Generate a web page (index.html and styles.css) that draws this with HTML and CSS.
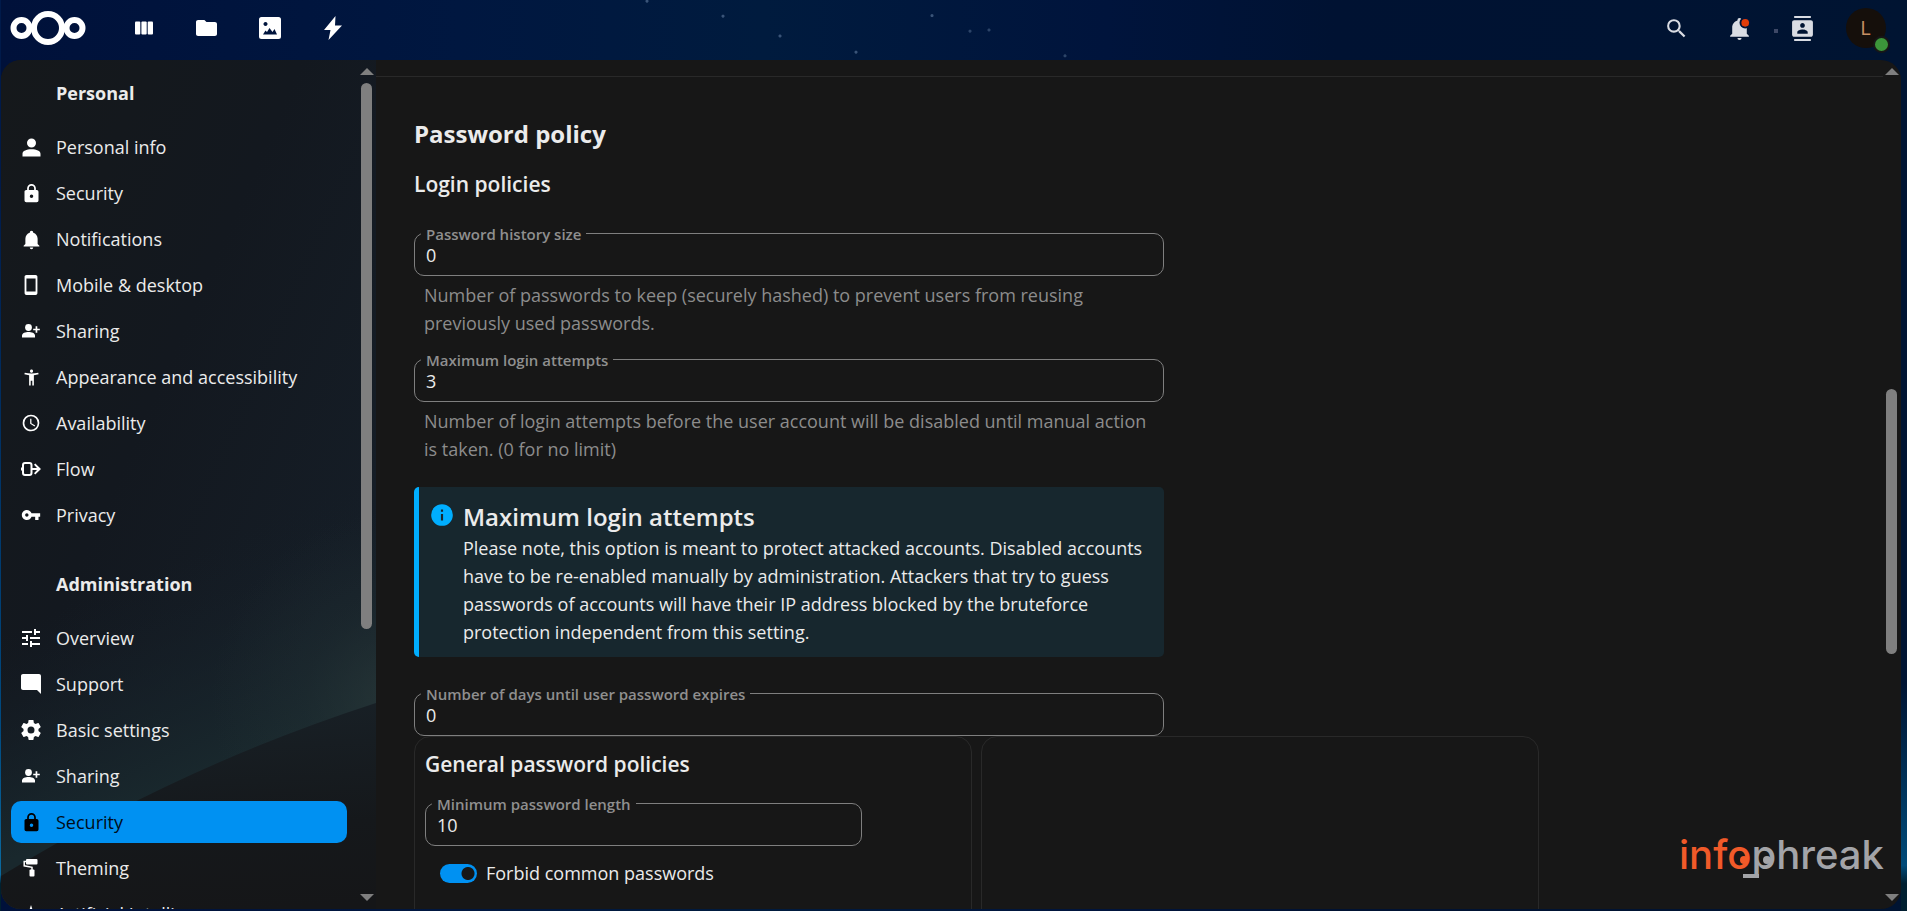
FILE: index.html
```html
<!DOCTYPE html>
<html lang="en">
<head>
<meta charset="utf-8">
<title>Security - Administration settings</title>
<link rel="stylesheet" href="styles.css">
</head>
<body>
<header class="topbar">
  <a class="brand" href="#" aria-label="Home">
    <svg width="76" height="36" viewBox="0 0 76 36" fill="none" stroke="#fff" stroke-width="6"><circle cx="38" cy="18" r="14"/><circle cx="11.500" cy="18" r="8"/><circle cx="64.500" cy="18" r="8"/></svg>
  </a>
  <nav class="apps" aria-label="Applications">
    <a class="app" href="#" aria-label="Deck"><svg width="18" height="14" viewBox="0 0 18 14" fill="#fff"><rect width="5.300" height="13" y=".5" rx="1"/><rect x="6.400" y=".5" width="5.300" height="13" rx="1"/><rect x="12.700" y=".5" width="5.300" height="13" rx="1"/></svg></a>
    <a class="app" href="#" aria-label="Files"><svg width="21" height="16" viewBox="2 4 20 16" preserveAspectRatio="none" fill="#fff"><path d="M10 4H4c-1.100 0-2 .9-2 2v12c0 1.100.9 2 2 2h16c1.100 0 2-.9 2-2V8c0-1.100-.9-2-2-2h-8l-2-2z"/></svg></a>
    <a class="app" href="#" aria-label="Photos"><svg width="22" height="22" viewBox="0 0 22 22"><path fill="#fff" fill-rule="evenodd" d="M2.500 0h17A2.500 2.500 0 0 1 22 2.500v17a2.500 2.500 0 0 1-2.500 2.500h-17A2.500 2.500 0 0 1 0 19.500v-17A2.500 2.500 0 0 1 2.500 0zM6.500 5a2 2 0 1 0 .01 0zM4 17.500h14L15.500 12l-2 3-3-4-2.500 4-1.500-1.500z"/></svg></a>
    <a class="app" href="#" aria-label="Activity"><svg width="20" height="26" viewBox="0 0 20 26" fill="#fff"><path d="M12.500 1 1 15h6.500L5.500 25 19 10.500h-7z"/></svg></a>
  </nav>
  <div class="tools">
    <button class="tool" aria-label="Search"><svg width="25" height="25" viewBox="0 0 24 24"><path d="M9.500,3A6.500,6.500 0 0,1 16,9.500C16,11.110 15.410,12.590 14.440,13.730L14.710,14H15.500L20.500,19L19,20.500L14,15.500V14.710L13.730,14.440C12.590,15.410 11.110,16 9.500,16A6.500,6.500 0 0,1 3,9.500A6.500,6.500 0 0,1 9.500,3M9.500,5C7,5 5,7 5,9.500C5,12 7,14 9.500,14C12,14 14,12 14,9.500C14,7 12,5 9.500,5Z"/></svg></button>
    <button class="tool" aria-label="Notifications"><svg width="25" height="25" viewBox="0 0 24 24"><path d="M21,19V20H3V19L5,17V11C5,7.900 7.030,5.170 10,4.290C10,4.190 10,4.100 10,4A2,2 0 0,1 12,2A2,2 0 0,1 14,4C14,4.100 14,4.190 14,4.290C16.970,5.170 19,7.900 19,11V17L21,19M14,21A2,2 0 0,1 12,23A2,2 0 0,1 10,21"/><circle cx="17.500" cy="6.500" r="5.500" fill="#001437"/><circle cx="17.500" cy="6.500" r="3.700" fill="#e23c08"/></svg></button>
    <button class="tool" aria-label="Contacts"><svg width="25" height="25" viewBox="0 0 24 24"><path d="M20 0H4v2h16V0zM4 24h16v-2H4v2zM20 4H4c-1.100 0-2 .9-2 2v12c0 1.100.9 2 2 2h16c1.100 0 2-.9 2-2V6c0-1.100-.9-2-2-2zm-8 2.750c1.240 0 2.250 1.010 2.250 2.250s-1.010 2.250-2.250 2.250S9.750 10.240 9.750 9 10.760 6.750 12 6.750zM17 17H7v-1.500c0-1.670 3.330-2.500 5-2.500s5 .83 5 2.500V17z"/></svg></button>
    <button class="tool" aria-label="Account menu"><span class="avatar">L<span class="status"></span></span></button>
  </div>
</header>

<div class="shell">
  <aside class="sidebar">
    <svg class="wallpaper" viewBox="0 0 375 849" preserveAspectRatio="none" aria-hidden="true">
      <defs>
        <linearGradient id="base" x1="0" y1="0" x2="1" y2="1"><stop offset="0" stop-color="#15181b"/><stop offset=".4" stop-color="#13181f"/><stop offset=".75" stop-color="#151d26"/></linearGradient>
        <linearGradient id="glow" gradientUnits="userSpaceOnUse" x1="300" y1="672" x2="215" y2="480"><stop offset="0" stop-color="#19282d"/><stop offset=".45" stop-color="#17232a" stop-opacity=".6"/><stop offset="1" stop-color="#151d26" stop-opacity="0"/></linearGradient>
        <radialGradient id="shine" gradientUnits="userSpaceOnUse" cx="400" cy="640" r="190"><stop offset="0" stop-color="#2b3a3b" stop-opacity=".7"/><stop offset=".5" stop-color="#263437" stop-opacity=".25"/><stop offset="1" stop-color="#263437" stop-opacity="0"/></radialGradient>
        <linearGradient id="ground" x1=".6" y1="0" x2=".7" y2="1"><stop offset="0" stop-color="#182026"/><stop offset=".6" stop-color="#15181b"/><stop offset="1" stop-color="#151618"/></linearGradient>
      </defs>
      <rect width="375" height="849" fill="url(#base)"/>
      <rect width="375" height="849" fill="url(#glow)"/>
      <rect width="375" height="849" fill="url(#shine)"/>
      <path d="M0 816Q180 706 375 643V849H0z" fill="url(#ground)"/>
    </svg>
    <nav class="menu" aria-label="Settings">
      <h2 class="menu-title">Personal</h2>
      <ul class="menu-list">
        <li><a class="item" href="#"><svg width="27" height="27" viewBox="0 0 24 24"><path d="M12,4A4,4 0 0,1 16,8A4,4 0 0,1 12,12A4,4 0 0,1 8,8A4,4 0 0,1 12,4M12,13.500C16.420,13.500 20,15 20,17.500V20H4V17.500C4,15 7.580,13.500 12,13.500Z"/></svg>Personal info</a></li>
        <li><a class="item" href="#"><svg width="21" height="21" viewBox="0 0 24 24"><path d="M12,17A2,2 0 0,0 14,15C14,13.890 13.100,13 12,13A2,2 0 0,0 10,15A2,2 0 0,0 12,17M18,8A2,2 0 0,1 20,10V20A2,2 0 0,1 18,22H6A2,2 0 0,1 4,20V10C4,8.890 4.900,8 6,8H7V6A5,5 0 0,1 12,1A5,5 0 0,1 17,6V8H18M12,3A3,3 0 0,0 9,6V8H15V6A3,3 0 0,0 12,3Z"/></svg>Security</a></li>
        <li><a class="item" href="#"><svg width="21" height="21" viewBox="0 0 24 24"><path d="M21,19V20H3V19L5,17V11C5,7.900 7.030,5.170 10,4.290C10,4.190 10,4.100 10,4A2,2 0 0,1 12,2A2,2 0 0,1 14,4C14,4.100 14,4.190 14,4.290C16.970,5.170 19,7.900 19,11V17L21,19M14,21A2,2 0 0,1 12,23A2,2 0 0,1 10,21"/></svg>Notifications</a></li>
        <li><a class="item" href="#"><svg width="22" height="22" viewBox="0 0 24 24"><path d="M17,19H7V5H17M17,1H7C5.890,1 5,1.890 5,3V21A2,2 0 0,0 7,23H17A2,2 0 0,0 19,21V3C19,1.890 18.100,1 17,1Z"/></svg>Mobile &amp; desktop</a></li>
        <li><a class="item" href="#"><svg width="18" height="14" viewBox="0 0 18 14"><circle cx="6.500" cy="3.500" r="3.400"/><path d="M0 13.500v-2C0 9 3.500 8 6.500 8s6.500 1 6.500 3.500v2zM13.600 2.300h1.700v2.400h2.500v1.600h-2.500v2.400h-1.700V6.300h-2.400V4.700h2.400z"/></svg>Sharing</a></li>
        <li><a class="item" href="#"><svg width="19" height="19" viewBox="0 0 24 24"><path d="M20.500 6c-2.610.7-5.670 1-8.500 1s-5.890-.3-8.500-1L3 8c1.860.5 4 .83 6 1v13h2v-6h2v6h2V9c2-.17 4.140-.5 6-1l-.5-2zM12 6c1.100 0 2-.9 2-2s-.9-2-2-2-2 .9-2 2 .9 2 2 2z"/></svg>Appearance and accessibility</a></li>
        <li><a class="item" href="#"><svg width="20" height="20" viewBox="0 0 24 24"><path d="M12,20A8,8 0 0,0 20,12A8,8 0 0,0 12,4A8,8 0 0,0 4,12A8,8 0 0,0 12,20M12,2A10,10 0 0,1 22,12A10,10 0 0,1 12,22C6.470,22 2,17.500 2,12A10,10 0 0,1 12,2M12.500,7V12.250L17,14.920L16.250,16.150L11,13V7H12.500Z"/></svg>Availability</a></li>
        <li><a class="item" href="#"><svg width="20" height="14" viewBox="0 0 20 14"><rect x="2" y="1" width="8.500" height="12" rx="2" fill="none" stroke="#fff" stroke-width="2"/><path d="M0 5.500h2v3H0zM11 6h5l-3-3.200L14.300 1.500 20 7l-5.700 5.500L13 11.200 16 8h-5z"/></svg>Flow</a></li>
        <li><a class="item" href="#"><svg width="20" height="20" viewBox="0 0 24 24"><path d="M12.650 10C11.830 7.670 9.610 6 7 6c-3.310 0-6 2.690-6 6s2.690 6 6 6c2.610 0 4.830-1.670 5.650-4H17v4h4v-4h2v-4H12.650zM7 14c-1.100 0-2-.9-2-2s.9-2 2-2 2 .9 2 2-.9 2-2 2z"/></svg>Privacy</a></li>
      </ul>
      <h2 class="menu-title">Administration</h2>
      <ul class="menu-list">
        <li><a class="item" href="#"><svg width="24" height="24" viewBox="0 0 24 24"><path d="M3 17v2h6v-2H3zM3 5v2h10V5H3zm10 16v-2h8v-2h-8v-2h-2v6h2zM7 9v2H3v2h4v2h2V9H7zm14 4v-2H11v2h10zm-6-4h2V7h4V5h-4V3h-2v6z"/></svg>Overview</a></li>
        <li><a class="item" href="#"><svg width="24" height="24" viewBox="0 0 24 24"><path d="M21.990 4c0-1.100-.89-2-1.990-2H4c-1.100 0-2 .9-2 2v12c0 1.100.9 2 2 2h14l4 4-.01-18z"/></svg>Support</a></li>
        <li><a class="item" href="#"><svg width="24" height="24" viewBox="0 0 24 24"><path d="M12,15.500A3.500,3.500 0 0,1 8.500,12A3.500,3.500 0 0,1 12,8.500A3.500,3.500 0 0,1 15.500,12A3.500,3.500 0 0,1 12,15.500M19.430,12.970C19.470,12.650 19.500,12.330 19.500,12C19.500,11.670 19.470,11.340 19.430,11L21.540,9.370C21.730,9.220 21.780,8.950 21.660,8.730L19.660,5.270C19.540,5.050 19.270,4.960 19.050,5.050L16.560,6.050C16.040,5.660 15.500,5.320 14.870,5.070L14.500,2.420C14.460,2.180 14.250,2 14,2H10C9.750,2 9.540,2.180 9.500,2.420L9.130,5.070C8.500,5.320 7.960,5.660 7.440,6.050L4.950,5.050C4.730,4.960 4.460,5.050 4.340,5.270L2.340,8.730C2.210,8.950 2.270,9.220 2.460,9.370L4.570,11C4.530,11.340 4.500,11.670 4.500,12C4.500,12.330 4.530,12.650 4.570,12.970L2.460,14.630C2.270,14.780 2.210,15.050 2.340,15.270L4.340,18.730C4.460,18.950 4.730,19.030 4.950,18.950L7.440,17.940C7.960,18.340 8.500,18.680 9.130,18.930L9.500,21.580C9.540,21.820 9.750,22 10,22H14C14.250,22 14.460,21.820 14.500,21.580L14.870,18.930C15.500,18.670 16.040,18.340 16.560,17.940L19.050,18.950C19.270,19.030 19.540,18.950 19.660,18.730L21.660,15.270C21.780,15.050 21.730,14.780 21.540,14.630L19.430,12.970Z"/></svg>Basic settings</a></li>
        <li><a class="item" href="#"><svg width="18" height="14" viewBox="0 0 18 14"><circle cx="6.500" cy="3.500" r="3.400"/><path d="M0 13.500v-2C0 9 3.500 8 6.500 8s6.500 1 6.500 3.500v2zM13.600 2.300h1.700v2.400h2.500v1.600h-2.500v2.400h-1.700V6.300h-2.400V4.700h2.400z"/></svg>Sharing</a></li>
        <li><a class="item item-active" href="#" aria-current="page"><svg width="21" height="21" viewBox="0 0 24 24"><path d="M12,17A2,2 0 0,0 14,15C14,13.890 13.100,13 12,13A2,2 0 0,0 10,15A2,2 0 0,0 12,17M18,8A2,2 0 0,1 20,10V20A2,2 0 0,1 18,22H6A2,2 0 0,1 4,20V10C4,8.890 4.900,8 6,8H7V6A5,5 0 0,1 12,1A5,5 0 0,1 17,6V8H18M12,3A3,3 0 0,0 9,6V8H15V6A3,3 0 0,0 12,3Z"/></svg>Security</a></li>
        <li><a class="item" href="#"><svg width="16" height="18" viewBox="0 0 16 18"><rect x="3" y="0" width="11.500" height="5.500" rx="1"/><path d="M3.500 2.500H1.200v4.300l7.800 1.500v3" fill="none" stroke="#fff" stroke-width="1.500"/><rect x="6.500" y="10.500" width="5" height="7" rx="1"/></svg>Theming</a></li>
        <li><a class="item" href="#"><svg width="20" height="20" viewBox="0 0 20 20"><path d="M10 1l2.200 6.800L19 10l-6.800 2.200L10 19l-2.200-6.800L1 10l6.800-2.200z"/></svg>Artificial Intelligence</a></li>
      </ul>
    </nav>
    <div class="scrollbar" aria-hidden="true">
      <span class="arrow arrow-up"></span>
      <div class="track"><span class="thumb thumb-nav"></span></div>
      <span class="arrow arrow-down"></span>
    </div>
  </aside>

  <main class="content">
    <div class="page">
      <section class="policy">
        <h1 class="title">Password policy</h1>
        <h2 class="subtitle">Login policies</h2>
        <div class="form">
          <div class="field">
            <label class="field-label" for="history">Password history size</label>
            <input class="field-input" id="history" type="text" inputmode="numeric" value="0">
          </div>
          <p class="hint">Number of passwords to keep (securely hashed) to prevent users from reusing previously used passwords.</p>
          <div class="field">
            <label class="field-label" for="attempts">Maximum login attempts</label>
            <input class="field-input" id="attempts" type="text" inputmode="numeric" value="3">
          </div>
          <p class="hint">Number of login attempts before the user account will be disabled until manual action is taken. (0 for no limit)</p>
          <div class="note" role="note">
            <svg class="note-icon" width="26" height="26" viewBox="0 0 24 24" fill="#00aeff"><path d="M13,9H11V7H13M13,17H11V11H13M12,2A10,10 0 0,0 2,12A10,10 0 0,0 12,22A10,10 0 0,0 22,12A10,10 0 0,0 12,2Z"/></svg>
            <div>
              <h3 class="note-title">Maximum login attempts</h3>
              <p class="note-text">Please note, this option is meant to protect attacked accounts. Disabled accounts have to be re-enabled manually by administration. Attackers that try to guess passwords of accounts will have their IP address blocked by the bruteforce protection independent from this setting.</p>
            </div>
          </div>
          <div class="field">
            <label class="field-label" for="expiry">Number of days until user password expires</label>
            <input class="field-input" id="expiry" type="text" inputmode="numeric" value="0">
          </div>
        </div>
        <div class="cards">
          <div class="card">
            <h2 class="card-title">General password policies</h2>
            <div class="field field-short">
              <label class="field-label" for="minlength">Minimum password length</label>
              <input class="field-input" id="minlength" type="text" inputmode="numeric" value="10">
            </div>
            <label class="switch"><input class="switch-input" type="checkbox" checked>Forbid common passwords</label>
          </div>
          <div class="card"></div>
        </div>
      </section>
    </div>
    <div class="scrollbar" aria-hidden="true">
      <span class="arrow arrow-up"></span>
      <div class="track"><span class="thumb thumb-main"></span></div>
      <span class="arrow arrow-down"></span>
    </div>
    <svg class="mark" width="206" height="52" viewBox="0 0 206 52" role="img" aria-label="infophreak">
      <text class="mark-text" x="0" y="38"><tspan fill="#f15a29">info</tspan><tspan fill="#a3a4a8">phreak</tspan></text>
      <circle cx="65" cy="29" r="4" fill="#f15a29"/>
      <circle cx="88" cy="29" r="4" fill="#a3a4a8"/>
      <path d="M64 45h16" stroke="#a3a4a8" stroke-width="4"/>
    </svg>
  </main>
</div>
</body>
</html>
```
FILE: styles.css
```css
* { box-sizing: border-box; }

body {
  margin: 0;
  height: 100vh;
  overflow: hidden;
  display: flex;
  flex-direction: column;
  padding: 0 6px 2px 1px;
  background:
    linear-gradient(#00133a00 75%, #004a78 95%, #001f30 97%) right / 6px 100% no-repeat,
    linear-gradient(#001a4a 20%, #004a80 80%, #0a6aa0 96%, #00202f 97%) left / 1px 100% no-repeat,
    linear-gradient(90deg, #00113a, #001740 24%, #001b3e 40%, #00143c 58%, #001232 70%, #001432 100%);
  background-color: #00133a;
  color: #ebebeb;
  font-family: "Open Sans", "Noto Sans", sans-serif;
  font-size: 18px;
  line-height: 28px;
}

h1, h2, h3, p, ul { margin: 0; padding: 0; }
ul { list-style: none; }
a { color: inherit; text-decoration: none; }
button { border: 0; padding: 0; background: none; font: inherit; }

.topbar {
  flex: none;
  height: 60px;
  padding: 0 4px 4px 9px;
  display: flex;
  align-items: center;
  background:
    radial-gradient(circle at 34% 2%, #3a5478 1px, transparent 2px),
    radial-gradient(circle at 38% 27%, #3a5478 1px, transparent 2px),
    radial-gradient(circle at 41% 60%, #3a5478 1px, transparent 2px),
    radial-gradient(circle at 45% 87%, #3a5478 1px, transparent 2px),
    radial-gradient(circle at 49% 26%, #3a5478 1px, transparent 2px),
    radial-gradient(circle at 51% 52%, #2c4468 1px, transparent 2px),
    radial-gradient(circle at 52% 50%, #2c4468 1px, transparent 2px),
    radial-gradient(circle at 56% 93%, #2c4468 1px, transparent 2px);
}
.brand { display: flex; }
.apps { display: flex; margin-left: 26px; }
.app, .tool { width: 63px; height: 56px; display: flex; align-items: center; justify-content: center; }
.tools { display: flex; margin-left: auto; }
.tool { position: relative; fill: #d9dce3; }
.tool:nth-child(3)::before {
  content: "";
  position: absolute;
  left: 3px;
  top: 29px;
  width: 4px;
  height: 4px;
  background: #3d4866;
}
.avatar {
  position: relative;
  width: 40px;
  height: 40px;
  border-radius: 50%;
  background: #150f0b;
  color: #c68f63;
  font-size: 20px;
  line-height: 40px;
}
.status {
  position: absolute;
  right: -4px;
  bottom: -5px;
  width: 17px;
  height: 17px;
  border: 2px solid #171717;
  border-radius: 50%;
  background: #3c963a;
}

.shell {
  flex: 1;
  min-height: 0;
  display: flex;
  border-radius: 20px;
  overflow: hidden;
  background: #171717;
}

.sidebar { position: relative; flex: none; width: 375px; display: flex; }
.wallpaper { position: absolute; inset: 0; width: 100%; height: 100%; }
.menu { position: relative; flex: 1; overflow: hidden; padding: 11px 11px 0 10px; }
.menu-title { padding: 8px 0 19px 45px; font-size: 18px; line-height: 28px; font-weight: 700; }
.menu-list { display: grid; gap: 4px; padding-bottom: 26px; }
.item {
  height: 42px;
  display: grid;
  grid-template-columns: 40px 1fr;
  column-gap: 5px;
  align-items: center;
  padding-right: 8px;
  border-radius: 10px;
  fill: #fff;
  white-space: nowrap;
}
.item svg { margin: 0 auto; }
.item-active { background: #0091f2; color: #000c18; fill: #000; }

.scrollbar {
  position: relative;
  flex: none;
  width: 18px;
  padding: 8px 1px 8px 0;
  display: flex;
  flex-direction: column;
  align-items: center;
  gap: 8px;
}
.arrow { border: 7px solid transparent; }
.arrow-up { border-top: 0; border-bottom-color: #7f7f7f; }
.arrow-down { border-bottom: 0; border-top-color: #7f7f7f; }
.track { flex: 1; width: 11px; display: flex; flex-direction: column; }
.thumb { border-radius: 6px; background: #7f7f7f; }
.thumb-nav { height: 68%; }
.thumb-main { height: 33%; margin-top: auto; margin-bottom: 232px; }

.content { position: relative; flex: 1; min-width: 0; display: flex; }
.page { flex: 1; min-width: 0; overflow: hidden; padding-top: 16px; }
.policy { border-top: 1px solid #292929; padding: 40px 38px 0; }
.title { font-size: 24px; line-height: 34px; font-weight: 700; }
.subtitle { margin-top: 19px; font-size: 21px; line-height: 28px; font-weight: 600; }
.form { max-width: 750px; padding-top: 35px; }

.field { position: relative; }
.field-label {
  position: absolute;
  left: 7px;
  top: -9px;
  padding: 0 5px;
  background: #171717;
  color: #8f8f8f;
  font-size: 15px;
  line-height: 20px;
  font-weight: 600;
}
.field-input {
  display: block;
  width: 100%;
  height: 43px;
  padding: 0 11px;
  border: 1px solid #7f7f7f;
  border-radius: 10px;
  background: transparent;
  color: #ebebeb;
  font: inherit;
  outline: 0;
}
.hint { padding: 5px 10px 22px; color: #8c8c8c; }

.note {
  margin: 2px 0 36px;
  padding: 13px 12px 11px 10px;
  display: flex;
  gap: 8px;
  border-left: 5px solid #00aeff;
  border-radius: 5px;
  background: #17272e;
}
.note-icon { flex: none; margin-top: 2px; }
.note-title { font-size: 24px; line-height: 34px; font-weight: 600; }

.cards { display: grid; grid-template-columns: repeat(2, 558px); gap: 9px; }
.card { min-height: 240px; padding: 13px 10px; border: 1px solid #292929; border-radius: 16px; }
.card-title { font-size: 21px; line-height: 28px; font-weight: 600; }
.field-short { max-width: 437px; margin-top: 25px; }
.switch { display: flex; align-items: center; gap: 9px; margin: 13px 0 0 15px; }
.switch-input {
  appearance: none;
  margin: 0;
  width: 37px;
  height: 19px;
  border-radius: 10px;
  background: radial-gradient(circle at 28px 50%, #171717 6px, #0091f2 7px);
}

.mark { position: absolute; right: 16px; bottom: 26px; }
.mark-text { font: 500 40px Inter, Roboto, sans-serif; }
```
